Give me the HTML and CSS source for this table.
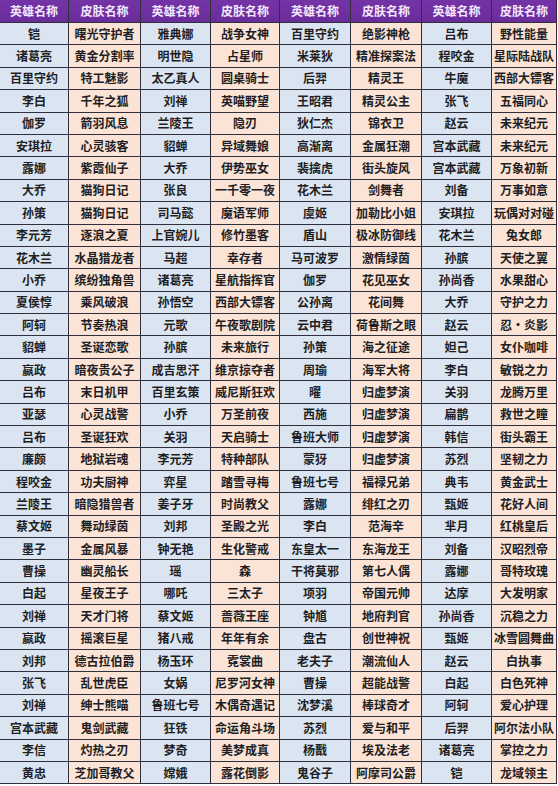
FILE: index.html
```html
<!DOCTYPE html>
<html lang="zh-CN">
<head>
<meta charset="utf-8">
<title>英雄皮肤表</title>
<link rel="stylesheet" href="styles.css">
</head>
<body>
<div class="sheet">
<div class="c th">英雄名称</div><div class="c th">皮肤名称</div><div class="c th">英雄名称</div><div class="c th">皮肤名称</div><div class="c th">英雄名称</div><div class="c th">皮肤名称</div><div class="c th">英雄名称</div><div class="c th">皮肤名称</div>
<div class="c h">铠</div><div class="c s">曙光守护者</div><div class="c h">雅典娜</div><div class="c s">战争女神</div><div class="c h">百里守约</div><div class="c s">绝影神枪</div><div class="c h">吕布</div><div class="c s">野性能量</div>
<div class="c h">诸葛亮</div><div class="c s">黄金分割率</div><div class="c h">明世隐</div><div class="c s">占星师</div><div class="c h">米莱狄</div><div class="c s">精准探案法</div><div class="c h">程咬金</div><div class="c s">星际陆战队</div>
<div class="c h">百里守约</div><div class="c s">特工魅影</div><div class="c h">太乙真人</div><div class="c s">圆桌骑士</div><div class="c h">后羿</div><div class="c s">精灵王</div><div class="c h">牛魔</div><div class="c s">西部大镖客</div>
<div class="c h">李白</div><div class="c s">千年之狐</div><div class="c h">刘禅</div><div class="c s">英喵野望</div><div class="c h">王昭君</div><div class="c s">精灵公主</div><div class="c h">张飞</div><div class="c s">五福同心</div>
<div class="c h">伽罗</div><div class="c s">箭羽风息</div><div class="c h">兰陵王</div><div class="c s">隐刃</div><div class="c h">狄仁杰</div><div class="c s">锦衣卫</div><div class="c h">赵云</div><div class="c s">未来纪元</div>
<div class="c h">安琪拉</div><div class="c s">心灵骇客</div><div class="c h">貂蝉</div><div class="c s">异域舞娘</div><div class="c h">高渐离</div><div class="c s">金属狂潮</div><div class="c h">宫本武藏</div><div class="c s">未来纪元</div>
<div class="c h">露娜</div><div class="c s">紫霞仙子</div><div class="c h">大乔</div><div class="c s">伊势巫女</div><div class="c h">裴擒虎</div><div class="c s">街头旋风</div><div class="c h">宫本武藏</div><div class="c s">万象初新</div>
<div class="c h">大乔</div><div class="c s">猫狗日记</div><div class="c h">张良</div><div class="c s">一千零一夜</div><div class="c h">花木兰</div><div class="c s">剑舞者</div><div class="c h">刘备</div><div class="c s">万事如意</div>
<div class="c h">孙策</div><div class="c s">猫狗日记</div><div class="c h">司马懿</div><div class="c s">魔语军师</div><div class="c h">虞姬</div><div class="c s">加勒比小姐</div><div class="c h">安琪拉</div><div class="c s">玩偶对对碰</div>
<div class="c h">李元芳</div><div class="c s">逐浪之夏</div><div class="c h">上官婉儿</div><div class="c s">修竹墨客</div><div class="c h">盾山</div><div class="c s">极冰防御线</div><div class="c h">花木兰</div><div class="c s">兔女郎</div>
<div class="c h">花木兰</div><div class="c s">水晶猎龙者</div><div class="c h">马超</div><div class="c s">幸存者</div><div class="c h">马可波罗</div><div class="c s">激情绿茵</div><div class="c h">孙膑</div><div class="c s">天使之翼</div>
<div class="c h">小乔</div><div class="c s">缤纷独角兽</div><div class="c h">诸葛亮</div><div class="c s">星航指挥官</div><div class="c h">伽罗</div><div class="c s">花见巫女</div><div class="c h">孙尚香</div><div class="c s">水果甜心</div>
<div class="c h">夏侯惇</div><div class="c s">乘风破浪</div><div class="c h">孙悟空</div><div class="c s">西部大镖客</div><div class="c h">公孙离</div><div class="c s">花间舞</div><div class="c h">大乔</div><div class="c s">守护之力</div>
<div class="c h">阿轲</div><div class="c s">节奏热浪</div><div class="c h">元歌</div><div class="c s">午夜歌剧院</div><div class="c h">云中君</div><div class="c s">荷鲁斯之眼</div><div class="c h">赵云</div><div class="c s">忍·炎影</div>
<div class="c h">貂蝉</div><div class="c s">圣诞恋歌</div><div class="c h">孙膑</div><div class="c s">未来旅行</div><div class="c h">孙策</div><div class="c s">海之征途</div><div class="c h">妲己</div><div class="c s">女仆咖啡</div>
<div class="c h">嬴政</div><div class="c s">暗夜贵公子</div><div class="c h">成吉思汗</div><div class="c s">维京掠夺者</div><div class="c h">周瑜</div><div class="c s">海军大将</div><div class="c h">李白</div><div class="c s">敏锐之力</div>
<div class="c h">吕布</div><div class="c s">末日机甲</div><div class="c h">百里玄策</div><div class="c s">威尼斯狂欢</div><div class="c h">曜</div><div class="c s">归虚梦演</div><div class="c h">关羽</div><div class="c s">龙腾万里</div>
<div class="c h">亚瑟</div><div class="c s">心灵战警</div><div class="c h">小乔</div><div class="c s">万圣前夜</div><div class="c h">西施</div><div class="c s">归虚梦演</div><div class="c h">扁鹊</div><div class="c s">救世之瞳</div>
<div class="c h">吕布</div><div class="c s">圣诞狂欢</div><div class="c h">关羽</div><div class="c s">天启骑士</div><div class="c h">鲁班大师</div><div class="c s">归虚梦演</div><div class="c h">韩信</div><div class="c s">街头霸王</div>
<div class="c h">廉颇</div><div class="c s">地狱岩魂</div><div class="c h">李元芳</div><div class="c s">特种部队</div><div class="c h">蒙犽</div><div class="c s">归虚梦演</div><div class="c h">苏烈</div><div class="c s">坚韧之力</div>
<div class="c h">程咬金</div><div class="c s">功夫厨神</div><div class="c h">弈星</div><div class="c s">踏雪寻梅</div><div class="c h">鲁班七号</div><div class="c s">福禄兄弟</div><div class="c h">典韦</div><div class="c s">黄金武士</div>
<div class="c h">兰陵王</div><div class="c s">暗隐猎兽者</div><div class="c h">姜子牙</div><div class="c s">时尚教父</div><div class="c h">露娜</div><div class="c s">绯红之刃</div><div class="c h">甄姬</div><div class="c s">花好人间</div>
<div class="c h">蔡文姬</div><div class="c s">舞动绿茵</div><div class="c h">刘邦</div><div class="c s">圣殿之光</div><div class="c h">李白</div><div class="c s">范海辛</div><div class="c h">芈月</div><div class="c s">红桃皇后</div>
<div class="c h">墨子</div><div class="c s">金属风暴</div><div class="c h">钟无艳</div><div class="c s">生化警戒</div><div class="c h">东皇太一</div><div class="c s">东海龙王</div><div class="c h">刘备</div><div class="c s">汉昭烈帝</div>
<div class="c h">曹操</div><div class="c s">幽灵船长</div><div class="c h">瑶</div><div class="c s">森</div><div class="c h">干将莫邪</div><div class="c s">第七人偶</div><div class="c h">露娜</div><div class="c s">哥特玫瑰</div>
<div class="c h">白起</div><div class="c s">星夜王子</div><div class="c h">哪吒</div><div class="c s">三太子</div><div class="c h">项羽</div><div class="c s">帝国元帅</div><div class="c h">达摩</div><div class="c s">大发明家</div>
<div class="c h">刘禅</div><div class="c s">天才门将</div><div class="c h">蔡文姬</div><div class="c s">蔷薇王座</div><div class="c h">钟馗</div><div class="c s">地府判官</div><div class="c h">孙尚香</div><div class="c s">沉稳之力</div>
<div class="c h">嬴政</div><div class="c s">摇滚巨星</div><div class="c h">猪八戒</div><div class="c s">年年有余</div><div class="c h">盘古</div><div class="c s">创世神祝</div><div class="c h">甄姬</div><div class="c s">冰雪圆舞曲</div>
<div class="c h">刘邦</div><div class="c s">德古拉伯爵</div><div class="c h">杨玉环</div><div class="c s">霓裳曲</div><div class="c h">老夫子</div><div class="c s">潮流仙人</div><div class="c h">赵云</div><div class="c s">白执事</div>
<div class="c h">张飞</div><div class="c s">乱世虎臣</div><div class="c h">女娲</div><div class="c s">尼罗河女神</div><div class="c h">曹操</div><div class="c s">超能战警</div><div class="c h">白起</div><div class="c s">白色死神</div>
<div class="c h">刘禅</div><div class="c s">绅士熊喵</div><div class="c h">鲁班七号</div><div class="c s">木偶奇遇记</div><div class="c h">沈梦溪</div><div class="c s">棒球奇才</div><div class="c h">阿轲</div><div class="c s">爱心护理</div>
<div class="c h">宫本武藏</div><div class="c s">鬼剑武藏</div><div class="c h">狂铁</div><div class="c s">命运角斗场</div><div class="c h">苏烈</div><div class="c s">爱与和平</div><div class="c h">后羿</div><div class="c s">阿尔法小队</div>
<div class="c h">李信</div><div class="c s">灼热之刃</div><div class="c h">梦奇</div><div class="c s">美梦成真</div><div class="c h">杨戬</div><div class="c s">埃及法老</div><div class="c h">诸葛亮</div><div class="c s">掌控之力</div>
<div class="c h">黄忠</div><div class="c s">芝加哥教父</div><div class="c h">嫦娥</div><div class="c s">露花倒影</div><div class="c h">鬼谷子</div><div class="c s">阿摩司公爵</div><div class="c h">铠</div><div class="c s">龙域领主</div>
</div>
</body>
</html>
```

FILE: styles.css
```css
html, body {
  margin: 0;
  padding: 0;
  background: #ffffff;
}

.sheet {
  display: grid;
  grid-template-columns: 68px 71px 69px 68px 70px 70px 69px 64px;
  grid-template-rows: 22px;
  grid-auto-rows: 21.4px;
  gap: 1px;
  width: max-content;
  background: #30303c;
  border-right: 1px solid #30303c;
  border-bottom: 1px solid #30303c;
  font-family: "Noto Sans CJK SC", "Microsoft YaHei", sans-serif;
  font-weight: 700;
  font-size: 12px;
  line-height: 1;
}

.c {
  display: flex;
  align-items: center;
  justify-content: center;
  white-space: nowrap;
  overflow: hidden;
  color: #1e1e24;
}

.th {
  background: linear-gradient(#7434a6, #6a2b9b);
  color: #f4e8ff;
}

.h {
  background: #dbe5f1;
}

.s {
  background: #fbe3d5;
}
```
